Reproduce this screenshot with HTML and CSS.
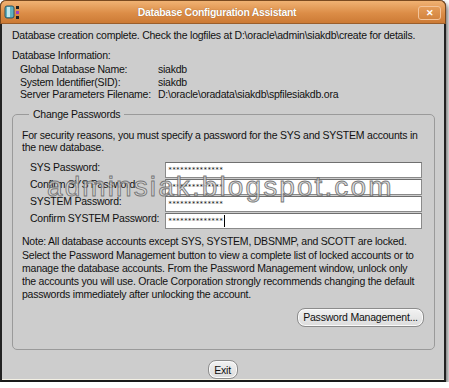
FILE: index.html
```html
<!DOCTYPE html>
<html lang="en">
<head>
  <meta charset="UTF-8" />
  <title>Database Configuration Assistant</title>
  <link rel="stylesheet" href="styles.css">
</head>
<body>
  <div class="window">
    <div class="titlebar">
      <svg class="app-icon" width="16" height="16" viewBox="0 0 16 16">
        <rect x="1" y="2" width="9" height="12" rx="2" fill="#5fb0c0" stroke="#2c5560" stroke-width="1"/>
        <rect x="3" y="3" width="3" height="10" fill="#bfe8ee"/>
        <rect x="12" y="2" width="3" height="3" fill="#222"/>
        <rect x="12" y="7" width="3" height="3" fill="#9b3fc0"/>
        <rect x="12" y="12" width="3" height="3" fill="#222"/>
      </svg>
      <div class="title">Database Configuration Assistant</div>
      <div class="close">&#x2715;</div>
    </div>

    <div class="content">
      <p class="intro">Database creation complete. Check the logfiles at D:\oracle\admin\siakdb\create for details.</p>

      <div class="info">
        <div class="info-head">Database Information:</div>
        <div class="info-grid">
          <span>Global Database Name:</span><span>siakdb</span>
          <span>System Identifier(SID):</span><span>siakdb</span>
          <span>Server Parameters Filename:</span><span>D:\oracle\oradata\siakdb\spfilesiakdb.ora</span>
        </div>
      </div>

      <fieldset class="group">
        <legend>Change Passwords</legend>
        <p class="group-text">For security reasons, you must specify a password for the SYS and SYSTEM accounts in<br>the new database.</p>

        <div class="pw-grid">
          <label>SYS Password:</label><div class="field">**************</div>
          <label>Confirm SYS Password:</label><div class="field">**************</div>
          <label>SYSTEM Password:</label><div class="field">**************</div>
          <label>Confirm SYSTEM Password:</label><div class="field">**************<span class="caret"></span></div>
        </div>

        <p class="note">Note: All database accounts except SYS, SYSTEM, DBSNMP, and SCOTT are locked.<br>Select the Password Management button to view a complete list of locked accounts or to<br>manage the database accounts. From the Password Management window, unlock only<br>the accounts you will use. Oracle Corporation strongly recommends changing the default<br>passwords immediately after unlocking the account.</p>

        <div class="btn-row">
          <button class="btn pm-btn">Password Management...</button>
        </div>
      </fieldset>

      <div class="exit-row">
        <button class="btn exit-btn">Exit</button>
      </div>
    </div>

    <div class="watermark">adminsiak.blogspot.com</div>
  </div>
</body>
</html>
```

FILE: styles.css
```css
body {
  margin: 0;
  background: #ffffff;
  font-family: 'Liberation Sans', Arial, sans-serif;
  font-size: 10.5px;
  letter-spacing: -0.23px;
  color: #111;
}

.window {
  position: relative;
  width: 442px;
  height: 380px;
  background: #cdcdcd;
  border-left: 2px solid #222;
  border-right: 2px solid #222;
  border-bottom: 2px solid #1a1a1a;
  border-radius: 6px 6px 0 0;
  box-shadow: 2px 3px 4px rgba(0, 0, 0, 0.55), inset 0 -1px 0 #f4f1e4;
  display: flex;
  flex-direction: column;
}

.titlebar {
  flex: none;
  height: 24px;
  margin: 0 -2px;
  background: linear-gradient(#f0b273, #dc8d47 55%, #cc7a35);
  border: 1px solid #7a4a20;
  border-bottom-color: #9a5e2c;
  border-radius: 6px 6px 0 0;
  display: flex;
  align-items: center;
  padding: 0 4px 0 3px;
  box-sizing: border-box;
}

.app-icon {
  flex: none;
}

.title {
  flex: 1;
  text-align: center;
  color: #fff;
  font-weight: bold;
  font-size: 10.5px;
  letter-spacing: -0.3px;
  text-shadow: 0 0 1px rgba(90, 50, 10, 0.6);
  padding-right: 4px;
}

.close {
  width: 21px;
  height: 12px;
  border: 1px solid #f3c49a;
  border-radius: 3px;
  background: linear-gradient(#e59c58, #d3843f);
  color: #fff;
  font-size: 9px;
  font-weight: bold;
  letter-spacing: 0;
  line-height: 12px;
  text-align: center;
  margin-top: 1px;
}

.content {
  flex: 1;
  padding: 4.5px 9px 0 10px;
  display: flex;
  flex-direction: column;
}

p {
  margin: 0;
}

.intro {
  line-height: 13px;
}

.info {
  margin-top: 7px;
}

.info-head {
  line-height: 13px;
}

.info-grid {
  display: grid;
  grid-template-columns: 138px auto;
  line-height: 12.5px;
  margin-top: 1.5px;
  padding-left: 8px;
}

.group {
  margin: 7px 0 0 0;
  padding: 8.25px 10px 0 9px;
  border: 1px solid #9a9a9a;
  border-radius: 5px;
  height: 242.5px;
  box-sizing: border-box;
}

.group legend {
  padding: 0 4px;
  margin-left: 7px;
  line-height: 13px;
}

.group-text {
  line-height: 12.5px;
}

.pw-grid {
  display: grid;
  grid-template-columns: 135px 257px;
  grid-auto-rows: 16px;
  row-gap: 1px;
  margin-top: 8.25px;
  padding-left: 8px;
}

.pw-grid label {
  line-height: 11px;
}

.field {
  height: 16px;
  box-sizing: border-box;
  background: #fff;
  border: 1px solid #8a8a8a;
  border-top-color: #6f6f6f;
  font-family: 'DejaVu Sans Mono', monospace;
  font-size: 7px;
  letter-spacing: -0.3px;
  line-height: 14px;
  padding-left: 2px;
  display: flex;
  align-items: center;
}

.caret {
  width: 1px;
  height: 12px;
  background: #000;
  margin-left: 1px;
}

.note {
  margin-top: 6.3px;
  line-height: 13.3px;
}

.btn-row {
  display: flex;
  justify-content: flex-end;
  margin-top: 6.2px;
}

.btn {
  font-family: 'Liberation Sans', Arial, sans-serif;
  font-size: 10.5px;
  letter-spacing: -0.2px;
  color: #111;
  height: 19px;
  padding: 0;
  border: 1px solid #8c8c8c;
  border-radius: 8px;
  background: linear-gradient(#f2f2f2, #dcdcdc);
  box-shadow: inset 0 0 0 1px #fafafa;
}

.pm-btn {
  width: 127px;
}

.watermark {
  position: absolute;
  left: 45px;
  top: 173px;
  font-family: 'Liberation Sans', Arial, sans-serif;
  font-size: 28px;
  line-height: 28px;
  letter-spacing: 2.1px;
  color: rgba(212, 212, 212, 0.8);
  -webkit-text-stroke: 0.9px rgba(100, 100, 100, 0.85);
  pointer-events: none;
}

.exit-row {
  display: flex;
  justify-content: center;
  margin-top: 10px;
  padding-right: 2px;
}

.exit-btn {
  width: 30px;
}
```
